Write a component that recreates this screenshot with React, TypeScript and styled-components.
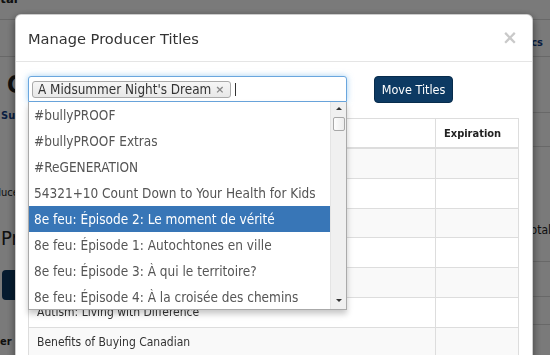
import React from 'react';
import styled, { createGlobalStyle } from 'styled-components';

const FONT = `"DejaVu Sans Condensed", "DejaVu Sans", Verdana, sans-serif`;

const GlobalStyle = createGlobalStyle`
  html, body {
    margin: 0;
    padding: 0;
    height: 100%;
    overflow: hidden;
    background: #fff;
  }
  body {
    font-family: ${FONT};
    color: #333;
  }
`;

const options = [
    '#bullyPROOF',
    '#bullyPROOF Extras',
    '#ReGENERATION',
    '54321+10 Count Down to Your Health for Kids',
    '8e feu: Épisode 2: Le moment de vérité',
    '8e feu: Épisode 1: Autochtones en ville',
    '8e feu: Épisode 3: À qui le territoire?',
    '8e feu: Épisode 4: À la croisée des chemins',
];

const tableRows = [
    '#bullyPROOF',
    '#bullyPROOF Extras',
    '#ReGENERATION',
    '54321+10 Count Down',
    '8e feu: Épisode 1',
    'Autism: Living with Difference',
    'Benefits of Buying Canadian',
];

/* ---------- page behind the modal ---------- */

const Page = styled.div`
  display: flex;
  width: 550px;
  height: 355px;
`;

const Strip = styled.div<{ $w: number }>`
  width: ${p => p.$w}px;
  display: flex;
  flex-direction: column;
`;

const Middle = styled.div`
  flex: 1;
`;

const Band = styled.div<{ $h: number; $line?: boolean; $pad?: number; $end?: boolean }>`
  height: ${p => p.$h}px;
  box-sizing: border-box;
  padding-top: ${p => p.$pad ?? 0}px;
  padding-right: ${p => (p.$end ? 7 : 0)}px;
  border-bottom: ${p => (p.$line ? '1px solid #dadada' : 'none')};
  display: flex;
  justify-content: ${p => (p.$end ? 'flex-end' : 'flex-start')};
  align-items: flex-start;
  white-space: nowrap;
`;

const Frag = styled.span<{ $size: number; $bold?: boolean; $link?: boolean; $shift?: number; $lh?: number; $top?: number }>`
  font-size: ${p => p.$size}px;
  line-height: ${p => p.$lh ?? Math.round(p.$size * 1.2)}px;
  font-weight: ${p => (p.$bold ? 700 : 400)};
  color: ${p => (p.$link ? '#13418a' : '#222')};
  margin-left: ${p => p.$shift ?? 0}px;
  margin-top: ${p => p.$top ?? 0}px;
  flex-shrink: 0;
`;

const PageButton = styled.div`
  margin: 8px 0 0 2px;
  width: 90px;
  height: 30px;
  border-radius: 4px;
  background: #0d3a63;
  flex-shrink: 0;
`;

/* ---------- modal ---------- */

const Overlay = styled.div`
  position: fixed;
  inset: 0;
  background: rgba(0, 0, 0, 0.52);
  padding: 14px 0 0 15px;
  box-sizing: border-box;
`;

const Modal = styled.div`
  width: 518px;
  height: 420px;
  box-sizing: border-box;
  background: #fff;
  border: 1px solid rgba(0, 0, 0, 0.2);
  border-radius: 6px;
  box-shadow: 0 3px 9px rgba(0, 0, 0, 0.5);
`;

const Header = styled.div`
  height: 47px;
  box-sizing: border-box;
  padding: 0 14px 0 12px;
  border-bottom: 1px solid #e5e5e5;
  display: flex;
  align-items: center;
  justify-content: space-between;
`;

const Title = styled.h4`
  margin: 0;
  font-family: "DejaVu Sans", Verdana, sans-serif;
  font-size: 14.6px;
  font-weight: 400;
  color: #333;
`;

const Close = styled.span`
  font-family: "DejaVu Sans", sans-serif;
  font-size: 19px;
  font-weight: 700;
  line-height: 1;
  color: #c9c9c9;
  margin-top: -2px;
`;

const Body = styled.div`
  padding: 14px 13px 0 12px;
`;

const Controls = styled.div`
  display: flex;
  align-items: flex-start;
  gap: 27px;
`;

const Select = styled.div`
  position: relative;
  width: 319px;
  z-index: 2;
`;

const SelectBox = styled.div`
  height: 26px;
  box-sizing: border-box;
  border: 1px solid #6aa6de;
  border-radius: 3px 3px 0 0;
  box-shadow: 0 0 6px rgba(102, 175, 233, 0.6);
  background: #fff;
  display: flex;
  align-items: center;
  gap: 4px;
  padding: 0 3px;
`;

const Tag = styled.span`
  height: 17px;
  box-sizing: border-box;
  display: inline-flex;
  align-items: center;
  gap: 4px;
  padding: 0 5px 0 5px;
  border: 1px solid #aaa;
  border-radius: 3px;
  background: linear-gradient(#f6f6f6, #e8e8e8);
  font-size: 13.4px;
  color: #333;
  white-space: nowrap;
`;

const TagRemove = styled.span`
  font-family: "DejaVu Sans", sans-serif;
  font-size: 11px;
  font-weight: 700;
  color: #888;
`;

const Caret = styled.span`
  width: 1px;
  height: 13px;
  background: #333;
`;

const Dropdown = styled.div`
  position: absolute;
  top: 100%;
  left: 0;
  width: 100%;
  height: 208px;
  box-sizing: border-box;
  border: 1px solid #aaa;
  border-top: none;
  background: #fff;
  box-shadow: 0 4px 6px rgba(0, 0, 0, 0.22);
  display: flex;
`;

const OptionList = styled.ul`
  flex: 1;
  margin: 0;
  padding: 0;
  list-style: none;
  overflow: hidden;
`;

const Option = styled.li<{ $active?: boolean }>`
  height: 26px;
  line-height: 26px;
  padding-left: 5px;
  font-size: 13.5px;
  white-space: nowrap;
  color: ${p => (p.$active ? '#fff' : '#555')};
  background: ${p => (p.$active ? '#3876b7' : 'transparent')};
`;

const Scrollbar = styled.div`
  width: 15px;
  background: #f0f0f0;
  border-left: 1px solid #e4e4e4;
  display: flex;
  flex-direction: column;
  align-items: center;
`;

const Arrow = styled.span<{ $down?: boolean }>`
  width: 0;
  height: 0;
  border-left: 3px solid transparent;
  border-right: 3px solid transparent;
  ${p => (p.$down ? 'border-top: 3px solid #333;' : 'border-bottom: 3px solid #333;')}
  margin: ${p => (p.$down ? '0 0 7px' : '5px 0 0')};
`;

const Thumb = styled.span`
  width: 12px;
  height: 14px;
  margin-top: 7px;
  box-sizing: border-box;
  border: 1px solid #a8a8a8;
  border-radius: 2px;
  background: linear-gradient(90deg, #fdfdfd, #ececec);
`;

const Spacer = styled.span`
  flex: 1;
`;

const MoveButton = styled.button`
  width: 79px;
  height: 27px;
  border: 1px solid #082c4c;
  border-radius: 4px;
  background: #0d3a63;
  color: #fff;
  font-family: ${FONT};
  font-size: 12.5px;
  padding: 0;
`;

const Table = styled.table`
  margin-top: 15px;
  width: 100%;
  table-layout: fixed;
  border-collapse: collapse;
  font-size: 12px;
`;

const HeadCell = styled.th<{ $w?: number }>`
  width: ${p => (p.$w ? `${p.$w}px` : 'auto')};
  height: 28px;
  padding: 0 8px;
  text-align: left;
  font-size: 11px;
  font-weight: 700;
  color: #222;
  border: 1px solid #ddd;
  border-bottom-width: 2px;
`;

const Row = styled.tr`
  &:nth-child(odd) {
    background: #f9f9f9;
  }
`;

const Cell = styled.td`
  height: 28.8px;
  padding: 0 8px;
  color: #333;
  border: 1px solid #ddd;
  white-space: nowrap;
`;

export default function App() {
    return (
        <>
            <GlobalStyle />
            <Page>
                <Strip $w={15}>
                    <Band $h={20} $line>
                        <Frag $size={13} $bold $shift={-14} $top={-9}>Total</Frag>
                    </Band>
                    <Band $h={37} $line />
                    <Band $h={50} $pad={14}>
                        <Frag $size={24} $bold $lh={28} $shift={7}>Co</Frag>
                    </Band>
                    <Band $h={36} $pad={2}>
                        <Frag $size={11} $bold $link $lh={13} $shift={1}>Subjects</Frag>
                    </Band>
                    <Band $h={64} $pad={43}>
                        <Frag $size={11} $lh={13} $shift={-21}>Produced</Frag>
                    </Band>
                    <Band $h={55} $pad={19}>
                        <Frag $size={20} $lh={24} $shift={1}>Producer Titles</Frag>
                    </Band>
                    <Band $h={46}>
                        <PageButton />
                    </Band>
                    <Band $h={47} $pad={27}>
                        <Frag $size={11} $bold $lh={13} $shift={-39}>Producer</Frag>
                    </Band>
                </Strip>
                <Middle />
                <Strip $w={17}>
                    <Band $h={20} $line />
                    <Band $h={37} $line $pad={16} $end>
                        <Frag $size={11} $bold $link $lh={13}>Topics</Frag>
                    </Band>
                    <Band $h={56} $line />
                    <Band $h={34} $line />
                    <Band $h={76} />
                    <Band $h={39} $line>
                        <Frag $size={12} $lh={14} $shift={-7}>Total</Frag>
                    </Band>
                    <Band $h={35} $line />
                    <Band $h={28} $line />
                    <Band $h={30} />
                </Strip>
            </Page>

            <Overlay>
                <Modal>
                    <Header>
                        <Title>Manage Producer Titles</Title>
                        <Close>×</Close>
                    </Header>
                    <Body>
                        <Controls>
                            <Select>
                                <SelectBox>
                                    <Tag>
                                        A Midsummer Night's Dream
                                        <TagRemove>×</TagRemove>
                                    </Tag>
                                    <Caret />
                                </SelectBox>
                                <Dropdown>
                                    <OptionList>
                                        {options.map((o, i) => (
                                            <Option key={o} $active={i === 4}>{o}</Option>
                                        ))}
                                    </OptionList>
                                    <Scrollbar>
                                        <Arrow />
                                        <Thumb />
                                        <Spacer />
                                        <Arrow $down />
                                    </Scrollbar>
                                </Dropdown>
                            </Select>
                            <MoveButton>Move Titles</MoveButton>
                        </Controls>
                        <Table>
                            <thead>
                                <tr>
                                    <HeadCell $w={390}>Title</HeadCell>
                                    <HeadCell>Expiration</HeadCell>
                                </tr>
                            </thead>
                            <tbody>
                                {tableRows.map(t => (
                                    <Row key={t}>
                                        <Cell>{t}</Cell>
                                        <Cell />
                                    </Row>
                                ))}
                            </tbody>
                        </Table>
                    </Body>
                </Modal>
            </Overlay>
        </>
    );
}
